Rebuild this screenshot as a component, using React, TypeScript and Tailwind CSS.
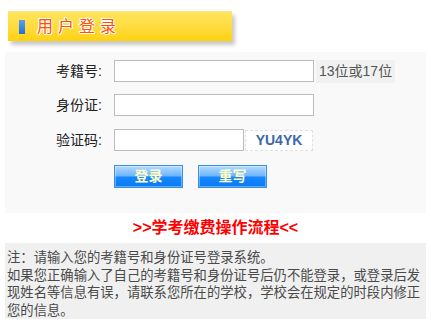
import { useState } from "react";

const FONT = "font-['Liberation_Sans','Noto_Sans_CJK_SC',sans-serif]";

export default function App() {
  const [examNo, setExamNo] = useState("");
  const [idNo, setIdNo] = useState("");
  const [code, setCode] = useState("");

  const reset = () => {
    setExamNo("");
    setIdNo("");
    setCode("");
  };

  return (
    <div className={`w-[431px] h-[326px] bg-white ${FONT}`}>
      {/* 标题条 */}
      <div className="pt-[11px] pl-[8px]">
        <div className="w-[224px] h-[30px] flex items-center border-t border-[#ffe680] bg-gradient-to-b from-[#ffe55c] to-[#ffd200] shadow-[3px_4px_4px_rgba(0,0,0,0.22)]">
          <span className="ml-[11px] w-[6px] h-[14px] bg-gradient-to-b from-[#5aa0f0] to-[#1f6fd6]" />
          <span className="ml-[12px] text-[16px] leading-none tracking-[5px] text-[#ff5000] [text-shadow:1px_0_#fff,-1px_0_#fff,0_1px_#fff,0_-1px_#fff,1px_1px_#fff,-1px_-1px_#fff]">
            用户登录
          </span>
        </div>
      </div>

      {/* 登录表单 */}
      <div className="mt-[11px] mx-[5px] h-[161px] bg-[#f9f9f9] pt-[8px] text-[14px] text-[#222]">
        <div className="flex items-center h-[22px]">
          <label className="w-[97px] text-right">考籍号:</label>
          <input value={examNo} onChange={e => setExamNo(e.target.value)} className="ml-[12px] w-[200px] h-[22px] border border-[#bcbcbc] bg-white outline-none px-1" />
          <span className="ml-[2px] h-[23px] px-[3px] flex items-center bg-[#f1f1f1] text-[#555]">13位或17位</span>
        </div>
        <div className="flex items-center h-[22px] mt-[12px]">
          <label className="w-[97px] text-right">身份证:</label>
          <input value={idNo} onChange={e => setIdNo(e.target.value)} className="ml-[12px] w-[200px] h-[22px] border border-[#bcbcbc] bg-white outline-none px-1" />
        </div>
        <div className="flex items-center h-[22px] mt-[13px]">
          <label className="w-[97px] text-right">验证码:</label>
          <input value={code} onChange={e => setCode(e.target.value)} className="ml-[12px] w-[130px] h-[22px] border border-[#bcbcbc] bg-white outline-none px-1" />
          <span className="ml-[1px] w-[68px] h-[21px] flex items-center justify-center border border-dashed border-[#dde0e6] bg-white text-[14px] font-bold text-[#3d68a8]">
            YU4YK
          </span>
        </div>
        <div className="flex ml-[109px] mt-[14px] gap-[15px]">
          <button className="w-[69px] h-[23px] border border-[#3a8fe8] bg-[linear-gradient(to_bottom,#b4dbff_0%,#6cb4ff_48%,#1787ff_52%,#0a7af2_100%)] shadow-[inset_0_0_0_1px_rgba(255,255,255,0.35)] text-[14px] font-bold text-[#ffffc8]">
            登录
          </button>
          <button onClick={reset} className="w-[69px] h-[23px] border border-[#3a8fe8] bg-[linear-gradient(to_bottom,#b4dbff_0%,#6cb4ff_48%,#1787ff_52%,#0a7af2_100%)] shadow-[inset_0_0_0_1px_rgba(255,255,255,0.35)] text-[14px] font-bold text-[#ffffc8]">
            重写
          </button>
        </div>
      </div>

      {/* 流程链接 */}
      <div className="h-[30px] flex items-center justify-center">
        <a className="text-[16px] font-bold text-[#ff0000] leading-none cursor-pointer">&gt;&gt;学考缴费操作流程&lt;&lt;</a>
      </div>

      {/* 提示 */}
      <div className="mx-[5px] h-[76px] bg-[#f0f0f0] px-[2px] pt-[6px] text-[13.33px] leading-[17.5px] text-[#4a4a4a]">
        注：请输入您的考籍号和身份证号登录系统。
        <br />
        如果您正确输入了自己的考籍号和身份证号后仍不能登录，或登录后发现姓名等信息有误，请联系您所在的学校，学校会在规定的时段内修正您的信息。
      </div>
    </div>
  );
}
